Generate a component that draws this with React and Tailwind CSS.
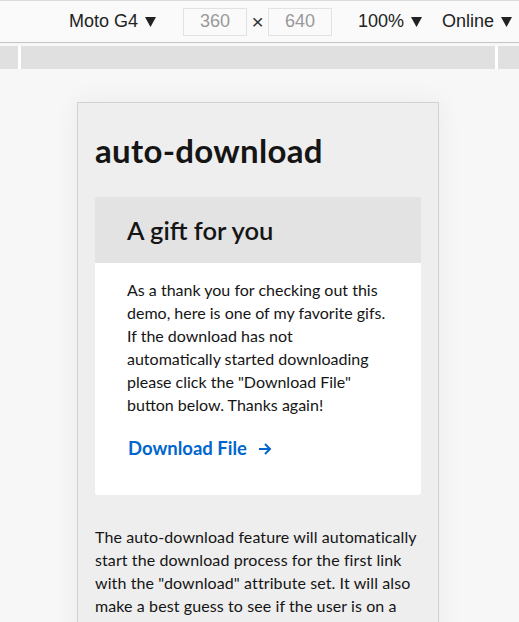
const Caret = () => (
  <svg width="11" height="10" viewBox="0 0 11 10" className="ml-[7px] inline-block">
    <path d="M0 0 H11 L5.5 10 Z" fill="#222" />
  </svg>
);

const Toolbar = () => (
  <div className="h-[43px] bg-[#fafafa] border-t border-[#dcdcdc] border-b border-b-[#c4c4c4] flex items-center text-[18px] text-[#222]" style={{ fontFamily: 'Helvetica, "Liberation Sans", Arial, sans-serif' }}>
    <div className="ml-[69px] flex items-center">Moto G4<Caret /></div>
    <div className="ml-[27px] w-[64px] h-[28px] border border-[#e2e2e2] flex items-center justify-center text-[#999]">360</div>
    <div className="mx-[3px] w-[15px] text-center text-[21px] text-[#333]">×</div>
    <div className="w-[64px] h-[28px] border border-[#e2e2e2] flex items-center justify-center text-[#999]">640</div>
    <div className="ml-[26px] flex items-center">100%<Caret /></div>
    <div className="ml-[20px] flex items-center shrink-0">Online<Caret /></div>
  </div>
);

const Ruler = () => (
  <div className="mt-[3px] h-[23px] bg-[#e0e0e0] flex justify-between px-[18px]">
    <div className="w-[3px] h-full bg-white" />
    <div className="w-[3px] h-full bg-white mr-[3px]" />
  </div>
);

export default function App() {
  return (
    <div className="w-[519px] h-[622px] overflow-hidden bg-[#f7f7f7]">
      <Toolbar />
      <Ruler />
      <div className="pt-[33px] flex justify-start">
        <div
          className="ml-[77px] w-[362px] bg-[#eeeeee] border border-[#d2d2d2] shadow-[0_0_24px_rgba(0,0,0,0.06)] px-[17px] pt-[27px] pb-10 text-[#151515]"
          style={{ fontFamily: 'Lato, "Noto Sans", sans-serif' }}
        >
          <h1 className="text-[33px] font-bold leading-[40px] tracking-[0.3px]">auto-download</h1>
          <div className="mt-[27px] rounded-[3px] overflow-hidden">
            <div className="bg-[#e3e3e3] h-[66px] px-8 flex items-center">
              <h2 className="text-[25.5px] font-semibold">A gift for you</h2>
            </div>
            <div className="bg-white px-8 pt-[15px] pb-[32px]">
              <p className="text-[16px] leading-[23px]">
                As a thank you for checking out this demo, here is one of my favorite gifs. If the download has not automatically started downloading please click the "Download File" button below. Thanks again!
              </p>
              <a href="#" className="mt-[19px] ml-[1px] inline-flex items-center text-[18.5px] font-bold text-[#0066cc]">
                Download File
                <svg width="14" height="14" viewBox="0 0 14 14" className="ml-[11px]" fill="none" stroke="#0066cc" strokeWidth="2">
                  <path d="M1 7 H12 M7 2 L12 7 L7 12" />
                </svg>
              </a>
            </div>
          </div>
          <p className="mt-[30px] text-[16px] leading-[23px] tracking-[0.1px]">
            The auto-download feature will automatically start the download process for the first link with the "download" attribute set. It will also make a best guess to see if the user is on a mobile device and skip the download if so.
          </p>
        </div>
      </div>
    </div>
  );
}
